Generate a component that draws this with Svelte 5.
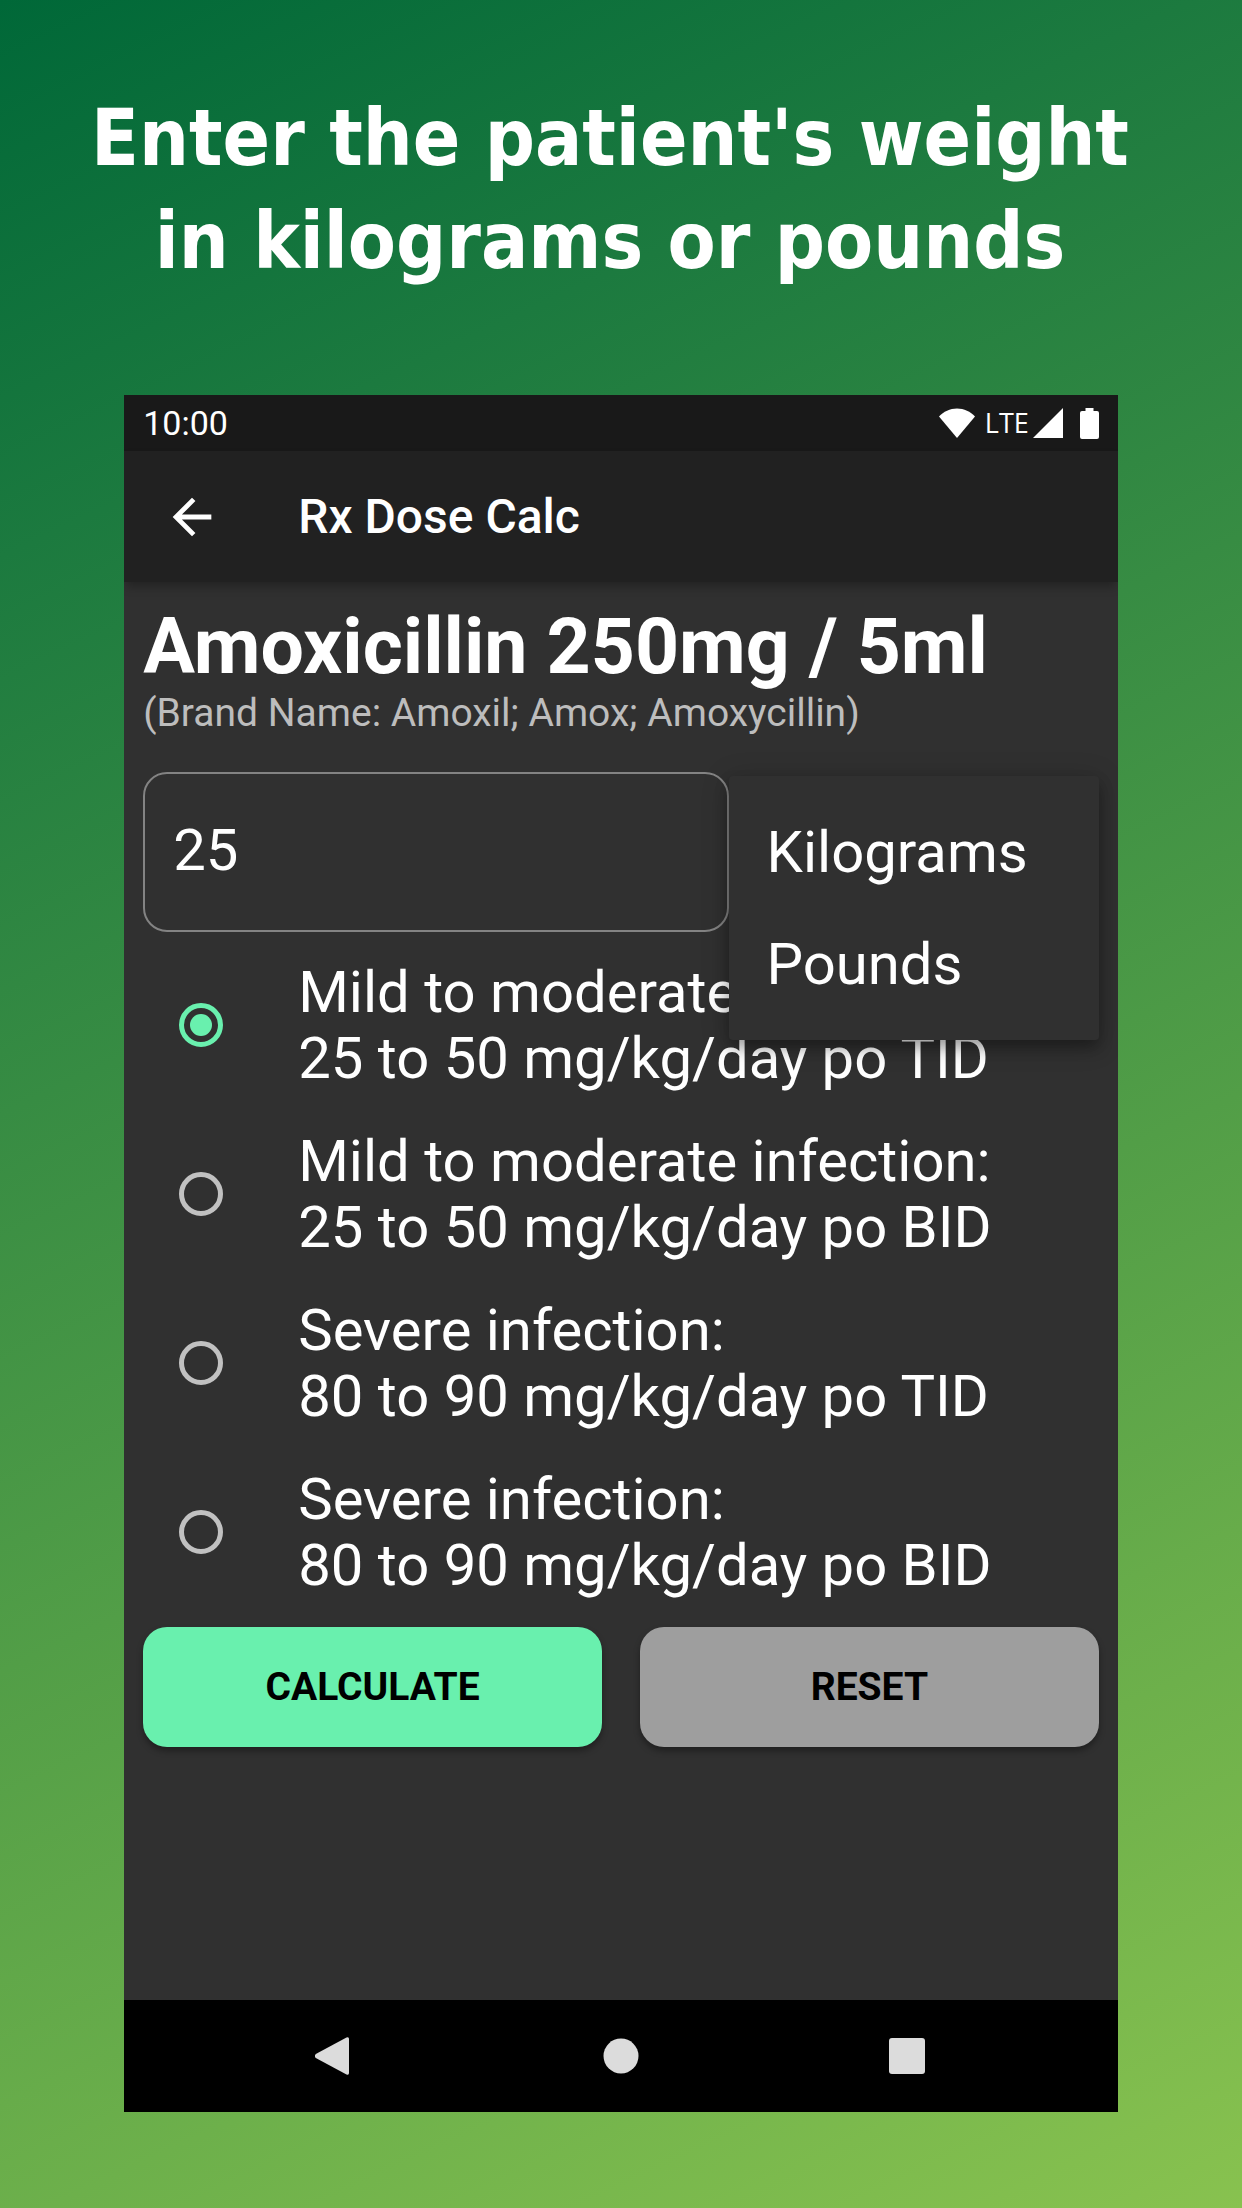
<script>
  let weight = $state('25');
  let unit = $state('Kilograms');
  let dose = $state(0);

  const units = ['Kilograms', 'Pounds'];
  const doses = [
    { title: 'Mild to moderate infection:', detail: '25 to 50 mg/kg/day po TID' },
    { title: 'Mild to moderate infection:', detail: '25 to 50 mg/kg/day po BID' },
    { title: 'Severe infection:', detail: '80 to 90 mg/kg/day po TID' },
    { title: 'Severe infection:', detail: '80 to 90 mg/kg/day po BID' }
  ];

  function reset() {
    weight = '';
    dose = 0;
  }
</script>

<div class="page">
  <header class="promo">
    <h1>Enter the patient's weight<br />in kilograms or pounds</h1>
  </header>

  <div class="phone">
    <div class="status">
      <span class="time">10:00</span>
      <div class="signals">
        <svg class="wifi" viewBox="0 0 36 30" aria-hidden="true">
          <path d="M18 30 0 8.500C4.500 3.500 11 0.500 18 0.500S31.500 3.500 36 8.500Z" />
        </svg>
        <span class="lte">LTE</span>
        <svg class="cell" viewBox="0 0 30 30" aria-hidden="true"><path d="M0 30 30 0V30Z" /></svg>
        <svg class="battery" viewBox="0 0 19 31" aria-hidden="true">
          <path d="M5.500 0H13.500V3H17Q19 3 19 5V29Q19 31 17 31H2Q0 31 0 29V5Q0 3 2 3H5.500Z" />
        </svg>
      </div>
    </div>

    <div class="appbar">
      <button class="back" type="button" aria-label="Back">
        <svg viewBox="0 0 24 24" aria-hidden="true">
          <path d="M20 11H7.830l5.590-5.590L12 4l-8 8 8 8 1.410-1.410L7.830 13H20v-2z" />
        </svg>
      </button>
      <span class="title">Rx Dose Calc</span>
    </div>

    <main>
      <h2>Amoxicillin 250mg / 5ml</h2>
      <p class="brand">(Brand Name: Amoxil; Amox; Amoxycillin)</p>

      <div class="entry">
        <input class="weight" type="text" inputmode="decimal" aria-label="Weight" bind:value={weight} />
        <div class="unit">
          <div class="menu" role="listbox" aria-label="Unit">
            {#each units as u}
              <button type="button" role="option" aria-selected={unit === u} onclick={() => (unit = u)}>{u}</button>
            {/each}
          </div>
        </div>
      </div>

      <div class="doses" role="radiogroup" aria-label="Dose">
        {#each doses as d, i}
          <label class="dose">
            <input type="radio" name="dose" value={i} bind:group={dose} />
            <span>{d.title}<br />{d.detail}</span>
          </label>
        {/each}
      </div>

      <div class="actions">
        <button class="calc" type="button">CALCULATE</button>
        <button class="reset" type="button" onclick={reset}>RESET</button>
      </div>
    </main>

    <nav aria-label="System">
      <button type="button" aria-label="Back">
        <svg viewBox="0 0 40 40" aria-hidden="true">
          <path d="M0.800 18 31.500 1.500Q34 0.500 34 3V37Q34 39.500 31.500 38.500L0.800 22Q-1 20 0.800 18Z" />
        </svg>
      </button>
      <button type="button" aria-label="Home">
        <svg viewBox="0 0 40 40" aria-hidden="true"><circle cx="20" cy="20" r="17.500" /></svg>
      </button>
      <button type="button" aria-label="Recents">
        <svg viewBox="0 0 40 40" aria-hidden="true"><rect x="2" y="2" width="36" height="36" rx="3" /></svg>
      </button>
    </nav>
  </div>
</div>

<style>
  :global(body) {
    margin: 0;
  }
  .page {
    box-sizing: border-box;
    min-height: 100vh;
    display: flex;
    flex-direction: column;
    align-items: center;
    padding: 87px 0 96px;
    background: linear-gradient(155deg, #006838, #1c7a3f 20%, #88c24f);
    color: #fff;
    font-family: Roboto, sans-serif;
  }
  button {
    margin: 0;
    padding: 0;
    border: 0;
    background: none;
    color: inherit;
    font: inherit;
    cursor: pointer;
  }
  svg {
    display: block;
    fill: currentColor;
  }

  .promo {
    align-self: stretch;
    padding-right: 22px;
    margin-bottom: 102px;
  }
  h1 {
    margin: 0;
    text-align: center;
    font: bold 78px/103px 'DejaVu Sans Condensed', 'DejaVu Sans', sans-serif;
  }

  .phone {
    width: 80%;
    flex: 1;
    display: flex;
    flex-direction: column;
    overflow: hidden;
    background: #303030;
  }
  .status {
    display: flex;
    align-items: center;
    justify-content: space-between;
    height: 56px;
    padding: 0 19px;
    background: #191919;
  }
  .time {
    font-size: 34px;
    line-height: 56px;
  }
  .signals {
    display: flex;
    align-items: center;
  }
  .wifi {
    width: 36px;
    height: 30px;
    margin-right: 10px;
  }
  .lte {
    font: 27px/32px 'Open Sans', sans-serif;
    margin-right: 4px;
  }
  .cell {
    width: 30px;
    height: 30px;
    margin-right: 17px;
  }
  .battery {
    width: 19px;
    height: 31px;
  }
  .appbar {
    display: flex;
    align-items: center;
    height: 131px;
    padding: 0 20px;
    background: #212121;
    box-shadow: 0 6px 10px -2px rgba(0, 0, 0, 0.3);
  }
  .back {
    width: 96px;
    height: 96px;
    display: grid;
    place-items: center;
    margin-right: 58px;
  }
  .back svg {
    width: 58px;
    height: 58px;
  }
  .title {
    font-size: 48px;
    line-height: 56px;
    font-weight: 500;
  }

  main {
    flex: 1;
    padding: 21px 19px 0;
  }
  h2 {
    margin: 0;
    font-size: 77px;
    line-height: 88px;
    font-weight: 700;
  }
  .brand {
    margin: 0 0 36px;
    font-size: 39px;
    line-height: 45px;
    color: #bdbdbd;
  }
  .entry {
    display: grid;
    grid-template-columns: minmax(0, 585fr) minmax(0, 370fr);
    margin-bottom: 8px;
  }
  .weight {
    box-sizing: border-box;
    width: 100%;
    height: 160px;
    padding: 0 28px 4px;
    border: 2px solid #838383;
    border-radius: 24px;
    background: none;
    color: inherit;
    font: 58px/66px Roboto, sans-serif;
    outline: 0;
  }
  .unit {
    position: relative;
  }
  .menu {
    position: absolute;
    top: 4px;
    left: 0;
    right: 0;
    padding: 20px 0;
    border-radius: 4px;
    background: #303030;
    box-shadow:
      0 8px 14px rgba(0, 0, 0, 0.28),
      0 4px 28px rgba(0, 0, 0, 0.22);
  }
  .menu button {
    display: block;
    width: 100%;
    padding: 0 38px;
    text-align: left;
    font-size: 58px;
    line-height: 112px;
  }
  .dose {
    display: flex;
    align-items: center;
    height: 169px;
    font-size: 58px;
    line-height: 66px;
  }
  .dose input {
    appearance: none;
    box-sizing: border-box;
    display: grid;
    place-items: center;
    flex: none;
    width: 44px;
    height: 44px;
    margin: 0 75px 0 36px;
    border: 5px solid #c1c1c1;
    border-radius: 50%;
  }
  .dose input:checked {
    border-color: #69f0ae;
  }
  .dose input:checked::after {
    content: '';
    width: 22px;
    height: 22px;
    border-radius: 50%;
    background: #69f0ae;
  }
  .actions {
    display: grid;
    grid-template-columns: 1fr 1fr;
    gap: 38px;
    margin-top: 11px;
  }
  .actions button {
    height: 120px;
    border-radius: 24px;
    color: #000;
    font-size: 39px;
    font-weight: 700;
    line-height: 46px;
    box-shadow: 0 4px 6px rgba(0, 0, 0, 0.35);
  }
  .actions .calc {
    background: #69f0ae;
  }
  .actions .reset {
    background: #9e9e9e;
  }

  nav {
    display: flex;
    justify-content: center;
    gap: 190px;
    height: 112px;
    background: #000;
    color: #dcdcdc;
  }
  nav button {
    width: 96px;
    display: grid;
    place-items: center;
  }
  nav svg {
    width: 40px;
    height: 40px;
  }
</style>
